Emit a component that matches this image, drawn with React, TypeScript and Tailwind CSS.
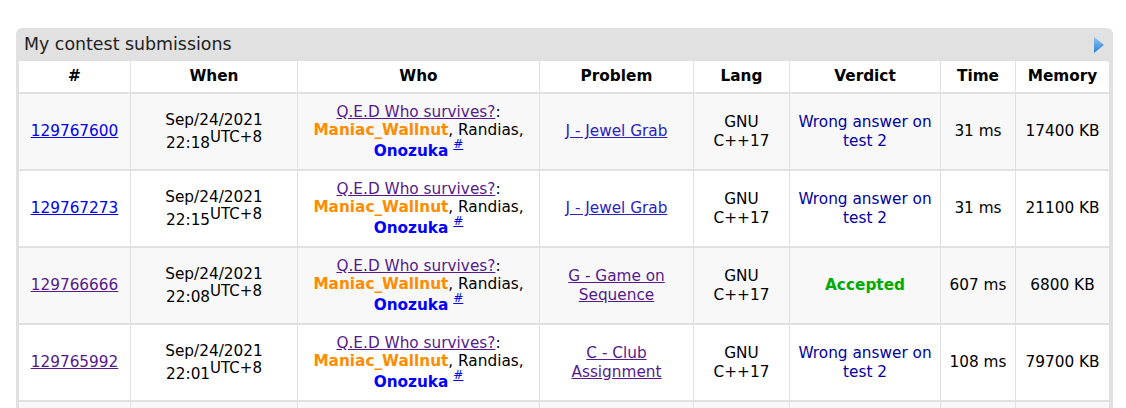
import React from 'react';

type Sub = {
  id: string;
  idVisited: boolean;
  date: string;
  time: string;
  problem: string[];
  problemVisited: boolean;
  accepted: boolean;
  ms: string;
  kb: string;
};

const SUBS: Sub[] = [
  { id: '129767600', idVisited: false, date: 'Sep/24/2021', time: '22:18', problem: ['J - Jewel Grab'], problemVisited: false, accepted: false, ms: '31 ms', kb: '17400 KB' },
  { id: '129767273', idVisited: false, date: 'Sep/24/2021', time: '22:15', problem: ['J - Jewel Grab'], problemVisited: false, accepted: false, ms: '31 ms', kb: '21100 KB' },
  { id: '129766666', idVisited: true, date: 'Sep/24/2021', time: '22:08', problem: ['G - Game on', 'Sequence'], problemVisited: true, accepted: true, ms: '607 ms', kb: '6800 KB' },
  { id: '129765992', idVisited: true, date: 'Sep/24/2021', time: '22:01', problem: ['C - Club', 'Assignment'], problemVisited: true, accepted: false, ms: '108 ms', kb: '79700 KB' },
  { id: '129765120', idVisited: true, date: 'Sep/24/2021', time: '21:54', problem: ['C - Club', 'Assignment'], problemVisited: true, accepted: false, ms: '93 ms', kb: '79700 KB' },
];

const HEADERS = ['#', 'When', 'Who', 'Problem', 'Lang', 'Verdict', 'Time', 'Memory'];
const WIDTHS = [112, 167, 242, 154, 96, 151, 75, 94];

export default function App() {
  return (
    <div className="h-[408px] overflow-hidden bg-white font-['DejaVu_Sans',Verdana,sans-serif] text-black">
      <div className="ml-[16px] mt-[28px] w-[1097px] rounded-t-[6px] bg-[#e1e1e1] pl-[2px] pr-[3px]">
        {/* Caption */}
        <div className="flex h-[33px] items-center justify-between pl-[6px] pr-[6px]">
          <span className="text-[17.4px] text-[#222]">My contest submissions</span>
          <svg width="10" height="16" viewBox="0 0 10 16" className="mt-[1px]">
            <defs>
              <linearGradient id="tri" x1="0" y1="0" x2="0" y2="1">
                <stop offset="0" stopColor="#8cc4f4" />
                <stop offset="1" stopColor="#2a7fd4" />
              </linearGradient>
            </defs>
            <polygon points="0,0 10,8 0,16" fill="url(#tri)" />
          </svg>
        </div>

        {/* Table */}
        <table className="w-[1092px] table-fixed border-collapse overflow-hidden rounded-tr-[5px] bg-white text-[15.3px] leading-[18.3px]">
          <colgroup>
            {WIDTHS.map((w, i) => (
              <col key={i} style={{ width: w }} />
            ))}
          </colgroup>
          <thead>
            <tr className="h-[32px] bg-white">
              {HEADERS.map((h) => (
                <th key={h} className="border-x border-[#e1e1e1] text-center align-middle font-bold">
                  {h}
                </th>
              ))}
            </tr>
          </thead>
          <tbody>
            {SUBS.map((s, i) => (
              <tr
                key={s.id}
                className={`h-[77px] border-t-2 border-[#e1e1e1] ${i % 2 === 0 ? 'bg-[#f8f8f8]' : 'bg-white'}`}
              >
                <td className="border-x border-[#e1e1e1] text-center align-middle">
                  <a href="#" className={`underline ${s.idVisited ? 'text-[#551a8b]' : 'text-[#0000ee]'}`}>
                    {s.id}
                  </a>
                </td>
                <td className="border-x border-[#e1e1e1] text-center align-middle">
                  {s.date}
                  <br />
                  {s.time}
                  <span className="align-super text-[15px] leading-[17px]">UTC+8</span>
                </td>
                <td className="border-x border-[#e1e1e1] text-center align-middle">
                  <a href="#" className="text-[#551a8b] underline">
                    Q.E.D Who survives?
                  </a>
                  :
                  <br />
                  <a href="#" className="font-bold text-[#ff8c00]">
                    Maniac_Wallnut
                  </a>
                  , Randias,
                  <br />
                  <a href="#" className="font-bold text-[#0000ff]">
                    Onozuka
                  </a>
                  {'\u00a0'}
                  <span className="relative top-[-2px] align-super text-[12px] leading-[15px]">
                    <a href="#" className="text-[#0000ee] underline">
                      #
                    </a>
                  </span>
                </td>
                <td className="border-x border-[#e1e1e1] px-[4px] text-center align-middle">
                  <a href="#" className={`underline ${s.problemVisited ? 'text-[#551a8b]' : 'text-[#2b22c4]'}`}>
                    {s.problem.map((p, j) => (
                      <React.Fragment key={j}>
                        {j > 0 && <br />}
                        {p}
                      </React.Fragment>
                    ))}
                  </a>
                </td>
                <td className="border-x border-[#e1e1e1] text-center align-middle">
                  GNU
                  <br />
                  C++17
                </td>
                <td className="border-x border-[#e1e1e1] text-center align-middle">
                  {s.accepted ? (
                    <span className="font-bold text-[#00aa00]">Accepted</span>
                  ) : (
                    <span className="text-[#0000a0]">
                      Wrong answer on
                      <br />
                      test 2
                    </span>
                  )}
                </td>
                <td className="border-x border-[#e1e1e1] text-center align-middle">{s.ms}</td>
                <td className="border-x border-[#e1e1e1] text-center align-middle">{s.kb}</td>
              </tr>
            ))}
          </tbody>
        </table>
      </div>
    </div>
  );
}
